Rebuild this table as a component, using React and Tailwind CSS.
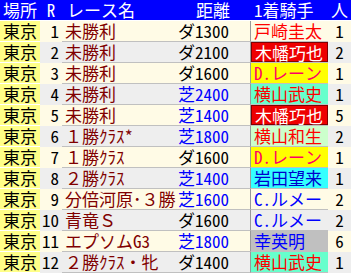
import React from "react";

const rows = [
  { r: 1, name: "未勝利", dist: "ダ1300", jockey: "戸崎圭太", js: "text-[#ff0000]", pop: 1 },
  { r: 2, name: "未勝利", dist: "ダ2100", jockey: "木幡巧也", js: "bg-[#ee0000] text-white border border-[#800000]", pop: 2 },
  { r: 3, name: "未勝利", dist: "ダ1600", jockey: "D.レーン", js: "bg-[#ffff00] text-[#ff0066]", pop: 1 },
  { r: 4, name: "未勝利", dist: "芝2400", jockey: "横山武史", js: "bg-[#66ffcc] text-[#ff0000]", pop: 1 },
  { r: 5, name: "未勝利", dist: "芝1400", jockey: "木幡巧也", js: "bg-[#ee0000] text-white border border-[#800000]", pop: 5 },
  { r: 6, name: "１勝ｸﾗｽ*", dist: "芝1800", jockey: "横山和生", js: "bg-[#ccffcc] text-[#ff0000]", pop: 2 },
  { r: 7, name: "１勝ｸﾗｽ", dist: "ダ1600", jockey: "D.レーン", js: "bg-[#ffff00] text-[#ff0066]", pop: 1 },
  { r: 8, name: "２勝ｸﾗｽ", dist: "芝1400", jockey: "岩田望来", js: "bg-[#33ffff] text-[#0000cc]", pop: 1 },
  { r: 9, name: "分倍河原･３勝", dist: "芝1600", jockey: "C.ルメー", js: "text-[#0000ff]", pop: 2 },
  { r: 10, name: "青竜Ｓ", dist: "ダ1600", jockey: "C.ルメー", js: "text-[#0000ff]", pop: 2 },
  { r: 11, name: "エプソムG3", dist: "芝1800", jockey: "幸英明", js: "bg-[#c0c0c0] text-[#0000ff]", pop: 6 },
  { r: 12, name: "２勝ｸﾗｽ・牝", dist: "ダ1400", jockey: "横山武史", js: "bg-[#66ffcc] text-[#ff0000]", pop: 1 },
];

export default function App() {
  return (
    <div className="w-[351px] h-[276px] bg-white overflow-hidden whitespace-nowrap font-['Noto_Sans_Mono_CJK_JP','Noto_Sans_CJK_JP',sans-serif] text-[17px] leading-[20px]">
      {/* header */}
      <div className="flex h-[21px] border-b border-white bg-[#0000ff] text-white">
        <div className="w-[40px] text-center">場所</div>
        <div className="w-[22px] text-center">R</div>
        <div className="w-[114px] pl-[5px]">レース名</div>
        <div className="w-[74px] text-center">距離</div>
        <div className="w-[78px] pl-[4px]">1着騎手</div>
        <div className="flex-1 text-center">人</div>
      </div>

      {rows.map((row, i) => (
        <div
          key={row.r}
          className={`flex h-[21px] ${i % 2 === 0 ? "bg-[#fffbe6]" : "bg-[#eeeeee]"}`}
        >
          <div className="w-[40px] bg-[#ffff88] border-b border-white text-center text-black">東京</div>
          <div className="w-[22px] text-right pr-[3px] text-black">{row.r}</div>
          <div className="w-[114px] pl-[3px] border-b border-[#c0c0c0] text-[#800000]">{row.name}</div>
          <div
            className={`w-[74px] pl-[2px] border-b border-[#c0c0c0] ${
              row.dist.startsWith("芝") ? "text-[#0000ff]" : "text-black"
            }`}
          >
            {row.dist}
          </div>
          <div className="w-[78px] border-l border-[#999999] border-b border-b-[#c0c0c0]">
            <div className={`h-full pl-[3px] ${row.js}`}>{row.jockey}</div>
          </div>
          <div className="flex-1 text-center text-black">{row.pop}</div>
        </div>
      ))}
    </div>
  );
}
